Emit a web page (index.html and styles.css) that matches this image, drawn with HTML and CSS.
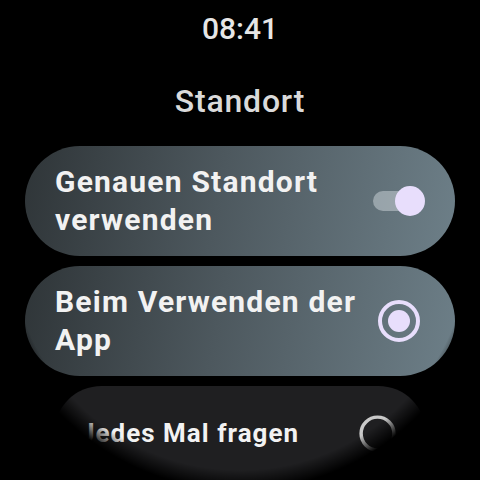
FILE: index.html
```html
<!DOCTYPE html>
<html lang="de">
<head>
    <meta charset="UTF-8">
    <meta name="viewport" content="width=device-width, initial-scale=1.0">
    <title>Standort</title>
    <link rel="stylesheet" href="styles.css">
</head>
<body>
    <div class="screen">
        <div class="clock">08:41</div>
        <h1 class="title">Standort</h1>

        <div class="list">
            <div class="chip chip-on">
                <span class="label">Genauen Standort verwenden</span>
                <span class="toggle"><span class="thumb"></span></span>
            </div>
            <div class="chip chip-on">
                <span class="label">Beim Verwenden der App</span>
                <span class="radio checked"><span class="dot"></span></span>
            </div>
            <div class="chip chip-off chip-edge">
                <span class="label">Jedes Mal fragen</span>
                <span class="radio"></span>
            </div>
        </div>

        <!-- round display edge -->
        <div class="bezel"></div>
    </div>
</body>
</html>
```

FILE: styles.css
```css
body {
    margin: 0;
    padding: 0;
    background: #000;
    font-family: 'Roboto', 'Noto Sans', sans-serif;
    color: #f2f2f2;
}
.screen {
    position: relative;
    width: 480px;
    height: 480px;
    overflow: hidden;
    display: flex;
    flex-direction: column;
    align-items: center;
}
.clock {
    margin-top: 13px;
    font-size: 30px;
    line-height: 32px;
    font-weight: 500;
    color: #e6e6e6;
}
.title {
    margin: 38px 0 0;
    font-size: 32px;
    line-height: 36px;
    font-weight: 500;
    letter-spacing: 0.8px;
    color: #dadada;
}
.list {
    margin-top: 27px;
    display: flex;
    flex-direction: column;
    gap: 10px;
}
.chip {
    box-sizing: border-box;
    width: 430px;
    height: 110px;
    padding: 0 30px;
    border-radius: 55px;
    display: flex;
    align-items: center;
    justify-content: space-between;
}
.chip-on {
    background: linear-gradient(100deg, #2f3538 0%, #4d585e 45%, #6d7f88 100%);
}
.chip-off {
    background: #1f1f21;
}
.chip-edge {
    transform: scale(0.865);
    transform-origin: top center;
}
.label {
    width: 310px;
    font-size: 30px;
    line-height: 38px;
    font-weight: 700;
    letter-spacing: 1.2px;
}
.toggle {
    position: relative;
    width: 52px;
    height: 30px;
    display: flex;
    align-items: center;
}
.toggle::before {
    content: '';
    width: 46px;
    height: 20px;
    border-radius: 10px;
    background: rgba(220, 226, 230, 0.45);
}
.thumb {
    position: absolute;
    right: 0;
    top: 0;
    width: 30px;
    height: 30px;
    border-radius: 50%;
    background: #e8defc;
}
.radio {
    box-sizing: border-box;
    width: 42px;
    height: 42px;
    margin-right: 5px;
    border-radius: 50%;
    border: 4px solid #c9c9c9;
    display: flex;
    align-items: center;
    justify-content: center;
}
.radio.checked {
    border-color: #e8defc;
}
.dot {
    width: 22px;
    height: 22px;
    border-radius: 50%;
    background: #e8defc;
}
.bezel {
    position: absolute;
    inset: 0;
    pointer-events: none;
    background: radial-gradient(circle at 50% 50%, rgba(0, 0, 0, 0) 230px, #000 250px);
}
```
